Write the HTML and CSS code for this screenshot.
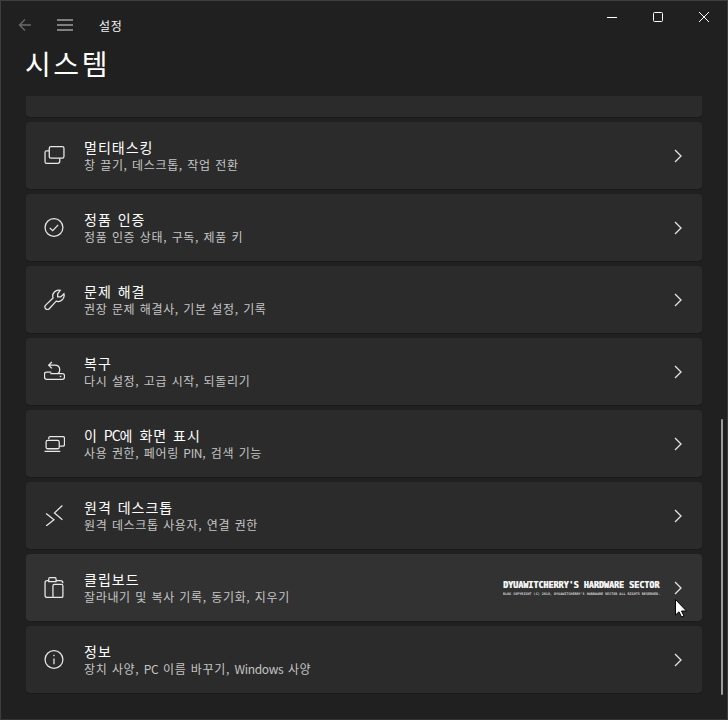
FILE: index.html
```html
<!DOCTYPE html>
<html lang="ko">

<head>
    <meta charset="UTF-8">
    <title>설정</title>
    <link rel="stylesheet" href="styles.css">
</head>

<body>
    <div class="window">
        <div class="titlebar">
            <svg class="back" width="16" height="16" viewBox="0 0 16 16"><path d="M14 8H2.500M8 2.500L2.500 8L8 13.500" /></svg>
            <svg class="menu" width="16" height="12" viewBox="0 0 16 12"><path d="M0 1H16M0 6H16M0 11H16" /></svg>
            <span class="app-name">설정</span>
            <div class="controls">
                <svg width="10" height="10" viewBox="0 0 10 10"><path d="M0 5.500H10" /></svg>
                <svg width="10" height="10" viewBox="0 0 10 10"><rect x="0.500" y="0.500" width="9" height="9" rx="1" /></svg>
                <svg width="10" height="10" viewBox="0 0 10 10"><path d="M0 0L10 10M10 0L0 10" /></svg>
            </div>
        </div>
        <h1>시스템</h1>
        <div class="list">
            <div class="card card-cut"></div>

            <div class="card">
                <svg class="icon" viewBox="0 0 20 20"><path d="M6.500 1.500H17.500Q19 1.500 19 3V11Q19 12.500 17.500 12.500H6.500Q5 12.500 5 11V3Q5 1.500 6.500 1.500Z" /><path d="M5 5.500H2.500Q1 5.500 1 7V16Q1 17.500 2.500 17.500H13Q15 17.500 15 15.500V12.500" /></svg>
                <div class="text"><div class="name">멀티태스킹</div><div class="desc">창 끌기, 데스크톱, 작업 전환</div></div>
                <svg class="chev" viewBox="0 0 8 14"><path d="M1 1L7 7L1 13" /></svg>
            </div>

            <div class="card">
                <svg class="icon" viewBox="0 0 20 20"><circle cx="9.500" cy="10" r="8.500" /><path d="M5.500 10.500L8.300 13L13.500 7.500" /></svg>
                <div class="text"><div class="name">정품 인증</div><div class="desc">정품 인증 상태, 구독, 제품 키</div></div>
                <svg class="chev" viewBox="0 0 8 14"><path d="M1 1L7 7L1 13" /></svg>
            </div>

            <div class="card">
                <svg class="icon" viewBox="0 0 20 20"><path d="M15.500 1.200A5.800 5.800 0 0 0 8.600 8.600L1.600 15.400A2.400 2.400 0 0 0 5 18.800L11.600 11.600A5.800 5.800 0 0 0 19 4.600L16 7.600H13V4.600Z" /></svg>
                <div class="text"><div class="name">문제 해결</div><div class="desc">권장 문제 해결사, 기본 설정, 기록</div></div>
                <svg class="chev" viewBox="0 0 8 14"><path d="M1 1L7 7L1 13" /></svg>
            </div>

            <div class="card">
                <svg class="icon" viewBox="0 0 20 20"><path d="M4.500 4H10Q15 4 15 8.500Q15 11 13 12" /><path d="M7.500 1L4.500 4L7.500 7" /><path d="M7 10.500H2.500Q0.500 10.500 0.500 12.500V15.500Q0.500 17.500 2.500 17.500H17.500Q19.500 17.500 19.500 15.500V14Q19.500 12 17.500 12H6" /><path d="M15 14.700H16.500" /></svg>
                <div class="text"><div class="name">복구</div><div class="desc">다시 설정, 고급 시작, 되돌리기</div></div>
                <svg class="chev" viewBox="0 0 8 14"><path d="M1 1L7 7L1 13" /></svg>
            </div>

            <div class="card">
                <svg class="icon" viewBox="0 0 20 20"><path d="M4.500 6V5Q4.500 3.500 6 3.500H18Q19.500 3.500 19.500 5V11Q19.500 12.500 18 12.500H15" /><rect x="2" y="7" width="12.500" height="8" rx="1.500" /><path d="M0.500 17.500H15.500" /></svg>
                <div class="text"><div class="name">이 <span class="latin">PC</span>에 화면 표시</div><div class="desc">사용 권한, 페어링 <span class="latin">PIN</span>, 검색 기능</div></div>
                <svg class="chev" viewBox="0 0 8 14"><path d="M1 1L7 7L1 13" /></svg>
            </div>

            <div class="card">
                <svg class="icon" viewBox="0 0 20 20"><path d="M2 8L9.500 14L2 20" /><path d="M17.500 0.500L10 7.500L17.500 14" /></svg>
                <div class="text"><div class="name">원격 데스크톱</div><div class="desc">원격 데스크톱 사용자, 연결 권한</div></div>
                <svg class="chev" viewBox="0 0 8 14"><path d="M1 1L7 7L1 13" /></svg>
            </div>

            <div class="card card-hover">
                <svg class="icon" viewBox="0 0 20 20"><path d="M4.500 3.500H3Q1 3.500 1 5.500V17.500Q1 19.500 3 19.500H8.500" /><path d="M4.500 4.500V2Q4.500 0.500 6 0.500H10Q11.500 0.500 11.500 2V4.500Z" /><path d="M11.500 3.500H15.500Q18 3.500 18 6" /><rect x="8.500" y="7" width="9.500" height="12.500" rx="1.500" /></svg>
                <div class="text"><div class="name">클립보드</div><div class="desc">잘라내기 및 복사 기록, 동기화, 지우기</div></div>
                <div class="watermark">
                    <div class="wm-title">DYUAWITCHERRY'S HARDWARE SECTOR</div>
                    <div class="wm-sub">BLOG COPYRIGHT (C) 2010, DYUAWITCHERRY'S HARDWARE SECTOR ALL RIGHTS RESERVED.</div>
                </div>
                <svg class="chev" viewBox="0 0 8 14"><path d="M1 1L7 7L1 13" /></svg>
            </div>

            <div class="card">
                <svg class="icon" viewBox="0 0 20 20"><circle cx="9.500" cy="10" r="8.500" /><path d="M9.500 9V14.500M9.500 5.500V7" /></svg>
                <div class="text"><div class="name">정보</div><div class="desc">장치 사양, <span class="latin">PC</span> 이름 바꾸기, <span class="latin">Windows</span> 사양</div></div>
                <svg class="chev" viewBox="0 0 8 14"><path d="M1 1L7 7L1 13" /></svg>
            </div>
        </div>
        <div class="scrollbar"></div>
        <svg class="cursor" width="13" height="19" viewBox="0 0 13 19"><path d="M0.500 0.500V16L4 12.800L6.500 18L9 17L6.500 12H11.500Z" /></svg>
    </div>
</body>

</html>
```

FILE: styles.css
```css
* {
    box-sizing: border-box;
}

body {
    margin: 0;
    background: #202020;
    font-family: "Noto Sans CJK KR", "Noto Sans", sans-serif;
}

.window {
    position: relative;
    width: 728px;
    height: 720px;
    overflow: hidden;
    background: #202020;
    border: 1px solid #3e3e3e;
    border-bottom-color: #333;
}

.titlebar {
    display: flex;
    align-items: center;
    height: 48px;
    padding-left: 16px;
    color: #fff;
}

.titlebar svg {
    fill: none;
    stroke: #fff;
    stroke-width: 1;
}

.titlebar .back {
    stroke: #6a6a6a;
    stroke-width: 1.3;
}

.titlebar .menu {
    margin-left: 24px;
    stroke: #ddd;
    stroke-width: 1.2;
}

.app-name {
    margin-left: 26px;
    font-size: 12px;
    letter-spacing: 0.8px;
    color: #f2f2f2;
}

.controls {
    display: flex;
    gap: 36px;
    align-items: center;
    margin-left: auto;
    margin-right: 18px;
    margin-top: -17px;
}

h1 {
    margin: -5px 0 0 24px;
    height: 52px;
    font-size: 28px;
    line-height: 38px;
    font-weight: 400;
    letter-spacing: 2.6px;
    color: #fff;
}

.list {
    display: flex;
    flex-direction: column;
    gap: 5px;
    width: 676px;
    margin-left: 25px;
}

.card {
    display: flex;
    align-items: center;
    flex: none;
    height: 67px;
    padding: 0 20px 0 18px;
    background: #2b2b2b;
    border-radius: 4px;
    box-shadow: 0 1px 0 #1b1b1b;
}

.card-cut {
    height: 21px;
    border-radius: 0 0 4px 4px;
}

.card-hover {
    background: #323232;
}

.icon {
    flex: none;
    width: 21px;
    height: 21px;
    fill: none;
    stroke: #e8e8e8;
    stroke-width: 1.2;
}

.text {
    margin-left: 19px;
    flex: 1;
}

.name {
    font-size: 14px;
    line-height: 17px;
    letter-spacing: 1px;
    word-spacing: 1px;
    color: #fff;
}

.name .latin {
    letter-spacing: -1px;
}

.desc {
    font-size: 12px;
    line-height: 17px;
    letter-spacing: 0.65px;
    word-spacing: 0.5px;
    color: #c5c5c5;
}

.desc .latin {
    letter-spacing: -0.3px;
}

.chev {
    flex: none;
    width: 8px;
    height: 14px;
    fill: none;
    stroke: #e4e4e4;
    stroke-width: 1.3;
}

.watermark {
    width: 158px;
    margin-right: 13px;
    margin-top: 1px;
    color: #f4f4f4;
    font-family: "DejaVu Sans Mono", monospace;
    font-weight: 700;
    white-space: nowrap;
    overflow: hidden;
}

.wm-title {
    font-size: 8.4px;
    line-height: 11px;
    text-shadow: 0.4px 0 0 #f4f4f4;
}

.wm-sub {
    font-size: 3.4px;
    line-height: 6px;
    color: #d0d0d0;
}

.scrollbar {
    position: absolute;
    top: 418px;
    left: 720px;
    width: 2px;
    height: 276px;
    background: #9b9b9b;
    border-radius: 1px;
}

.cursor {
    position: absolute;
    top: 598px;
    left: 674px;
    fill: #fff;
    stroke: #000;
    stroke-width: 1;
}
```
